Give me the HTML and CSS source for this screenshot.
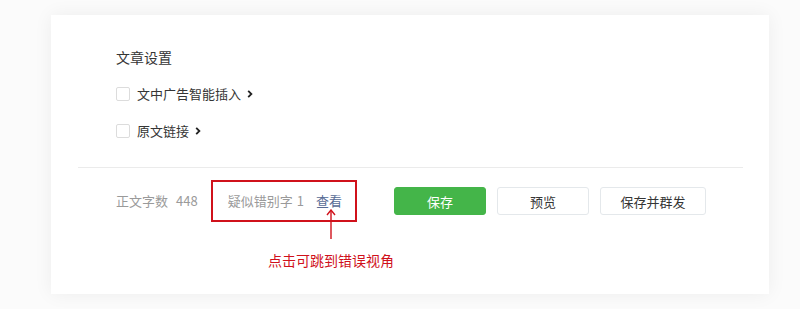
FILE: index.html
```html
<!DOCTYPE html>
<html lang="zh">
<head>
<meta charset="utf-8">
<link rel="stylesheet" href="styles.css">
</head>
<body>
<div class="card">
  <div class="settings">
    <div class="title">文章设置</div>
    <div class="option">
      <span class="checkbox"></span>
      <span class="label">文中广告智能插入</span>
      <svg class="chev" width="6" height="10" viewBox="0 0 6 10"><path d="M1.2 1.8 L4.4 5 L1.2 8.2" fill="none" stroke="#222" stroke-width="1.8"/></svg>
    </div>
    <div class="option">
      <span class="checkbox"></span>
      <span class="label">原文链接</span>
      <svg class="chev" width="6" height="10" viewBox="0 0 6 10"><path d="M1.2 1.8 L4.4 5 L1.2 8.2" fill="none" stroke="#222" stroke-width="1.8"/></svg>
    </div>
  </div>
  <div class="divider"></div>
  <div class="footer">
    <span class="stat">正文字数<span class="num">448</span></span>
    <span class="typo">疑似错别字<span class="num one">1</span><a class="view">查看<span class="annot"><svg width="10" height="30" viewBox="0 0 10 30"><path d="M5 1 L5 30" stroke="#d0111b" stroke-width="1.4"/><path d="M1 6 L5 1 L9 6" fill="none" stroke="#d0111b" stroke-width="1.4"/></svg><span class="note">点击可跳到错误视角</span></span></a></span>
    <div class="buttons">
      <button class="btn primary">保存</button>
      <button class="btn">预览</button>
      <button class="btn wide">保存并群发</button>
    </div>
  </div>
</div>
</body>
</html>
```

FILE: styles.css
```css
* { box-sizing: border-box; }
html, body { margin: 0; padding: 0; }
body {
  font-family: "Noto Sans CJK SC", "Noto Sans", sans-serif;
  color: #353535;
  width: 800px;
  height: 309px;
  padding-top: 15px;
  background: #fbfbfb;
}
.card {
  margin-left: 51px;
  width: 718px;
  height: 279px;
  background: #fff;
  box-shadow: 0 0 18px rgba(0, 0, 0, 0.06);
  padding-top: 32px;
}
.settings { padding-left: 65px; }
.title {
  font-size: 14px;
  line-height: 20px;
  height: 20px;
}
.option {
  display: flex;
  align-items: center;
  height: 20px;
  margin-top: 17px;
  font-size: 13px;
}
.checkbox {
  width: 14px;
  height: 14px;
  border: 1px solid #dcdcdc;
  border-radius: 2px;
  margin-right: 7px;
}
.label { line-height: 20px; }
.chev { margin-left: 6px; }
.divider {
  height: 1px;
  background: #ebebeb;
  margin: 26px 26px 0 27px;
}
.footer {
  display: flex;
  align-items: center;
  height: 28px;
  margin-top: 19px;
  padding-left: 65px;
  font-size: 13px;
  color: #9a9a9a;
  line-height: 20px;
}
.num { margin-left: 8px; }
.one { margin-left: 4px; }
.stat { margin-right: 30px; }
.typo { position: relative; display: inline-flex; }
.typo::before {
  content: "";
  position: absolute;
  left: -17px;
  right: -15px;
  top: -11px;
  bottom: -11px;
  border: 2px solid #d0111b;
}
.view {
  position: relative;
  color: #576b95;
  margin-left: 12px;
}
.annot {
  position: absolute;
  left: calc(50% + 2px);
  top: 18px;
  transform: translateX(-50%);
  display: flex;
  flex-direction: column;
  align-items: center;
}
.annot svg { display: block; }
.note {
  margin-top: 11px;
  white-space: nowrap;
  font-size: 14px;
  line-height: 20px;
  color: #d0111b;
}
.buttons {
  display: flex;
  gap: 11px;
  margin-left: 52px;
}
.btn {
  font-family: inherit;
  font-size: 13px;
  height: 28px;
  width: 92px;
  padding: 0;
  border: 1px solid #e4e8eb;
  border-radius: 3px;
  background: #fff;
  color: #353535;
}
.btn.wide { width: 106px; }
.btn.primary {
  background: #44b549;
  border-color: #44b549;
  color: #fff;
}
```
